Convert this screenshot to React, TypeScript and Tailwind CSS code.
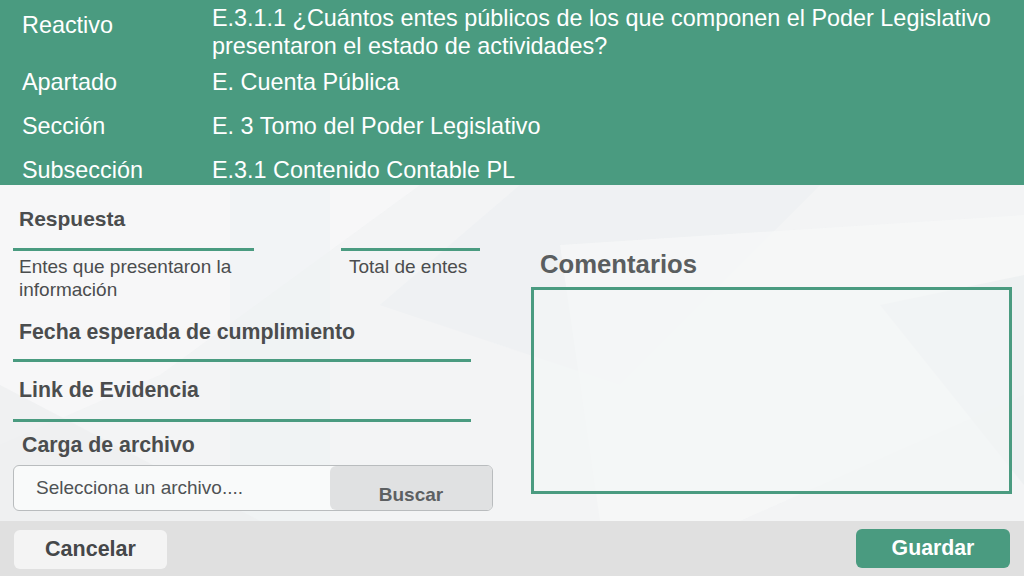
import React from "react";

const green = "bg-[#4a9b80]";

// header rows: label / value
const headerRows = [
  {
    label: "Reactivo",
    value:
      "E.3.1.1 ¿Cuántos entes públicos de los que componen el Poder Legislativo presentaron el estado de actividades?",
  },
  { label: "Apartado", value: "E. Cuenta Pública" },
  { label: "Sección", value: "E. 3 Tomo del Poder Legislativo" },
  { label: "Subsección", value: "E.3.1 Contenido Contable PL" },
];

const Background = () => (
  <svg
    className="absolute inset-0 h-full w-full"
    viewBox="0 0 1024 336"
    preserveAspectRatio="none"
  >
    <rect width="1024" height="336" fill="#f3f4f5" />
    <polygon points="0,0 420,0 160,190 0,260" fill="#f7f8f9" opacity="0.8" />
    <polygon points="520,0 820,0 620,200 380,120" fill="#eceff2" opacity="0.7" />
    <polygon points="560,60 1024,30 1024,210 740,336 600,336" fill="#f6f7f8" opacity="0.8" />
    <polygon points="230,0 330,0 330,336 230,336" fill="#eef1f3" opacity="0.5" />
    <polygon points="0,200 260,336 0,336" fill="#eceef0" opacity="0.7" />
    <polygon points="880,120 1024,90 1024,300" fill="#e9ecef" opacity="0.6" />
  </svg>
);

export default function App() {
  return (
    <div
      className="flex h-[576px] w-[1024px] flex-col overflow-hidden text-[#4b4d4e]"
      style={{ fontFamily: '"Liberation Sans", Arial, Helvetica, sans-serif' }}
    >
      <header className={`${green} h-[185px] shrink-0 pl-[22px] pr-2 pt-[4px] text-white`}>
        <div className="grid grid-cols-[190px_1fr] gap-y-[16px] text-[23.4px] leading-[28px]">
          {headerRows.map((row, i) => (
            <React.Fragment key={row.label}>
              <div className={i === 0 ? "pt-[7px]" : ""}>{row.label}</div>
              <div className={i === 0 ? "-mb-[8px]" : ""}>{row.value}</div>
            </React.Fragment>
          ))}
        </div>
      </header>

      <main className="relative flex flex-1">
        <Background />

        <section className="relative w-[531px] shrink-0 pl-[13px]">
          <h2 className="pl-[6px] pt-[21px] text-[21px] font-bold leading-[25px]">Respuesta</h2>
          <div className="mt-[17px] flex">
            <div className="w-[241px]">
              <div className="h-[3px] bg-[#4a9b80]" />
              <p className="mt-[4px] pl-[6px] text-[19px] leading-[23px]">
                Entes que presentaron la información
              </p>
            </div>
            <div className="ml-[87px] w-[139px]">
              <div className="h-[3px] bg-[#4a9b80]" />
              <p className="mt-[4px] whitespace-nowrap pl-[8px] text-[19px] leading-[23px]">Total de entes</p>
            </div>
          </div>

          <h2 className="mt-[19px] pl-[6px] text-[21.3px] font-bold leading-[25px]">
            Fecha esperada de cumplimiento
          </h2>
          <div className="mt-[14px] h-[3px] w-[458px] bg-[#4a9b80]" />

          <h2 className="mt-[16px] pl-[6px] text-[21.3px] font-bold leading-[25px]">Link de Evidencia</h2>
          <div className="mt-[16px] h-[3px] w-[458px] bg-[#4a9b80]" />

          <h2 className="mt-[11px] pl-[9px] text-[21.3px] font-bold leading-[25px]">Carga de archivo</h2>
          <div className="mt-[7px] flex h-[46px] w-[480px] overflow-hidden rounded-md border border-[#b9bcbe] bg-[#f9fafa]">
            <span className="flex-1 pl-[22px] pt-[11px] text-[19px] leading-[22px] text-[#4f5254]">
              Selecciona un archivo....
            </span>
            <button className="w-[162px] rounded-l-md bg-[#e0e1e2] pt-[13px] text-[19px] font-bold leading-[24px] text-[#5d6062]">
              Buscar
            </button>
          </div>
        </section>

        <section className="relative flex-1">
          <h2 className="pl-[9px] pt-[65px] text-[25.7px] font-bold leading-[29px] text-[#5a5e60]">
            Comentarios
          </h2>
          <div className="mt-[8px] h-[207px] w-[481px] border-[3px] border-[#4a9b80] bg-[#f4f6f7]/60" />
        </section>
      </main>

      <footer className="flex h-[55px] shrink-0 items-start justify-between bg-[#e0e0e0] pl-[14px] pr-[14px] pt-[8px]">
        <button className="mt-[1px] h-[39px] w-[153px] rounded-md bg-[#f4f4f4] text-[21.5px] font-bold text-[#454749]">
          Cancelar
        </button>
        <button className={`${green} h-[39px] w-[154px] rounded-md pt-[1px] text-[21.3px] font-bold text-white`}>
          Guardar
        </button>
      </footer>
    </div>
  );
}
